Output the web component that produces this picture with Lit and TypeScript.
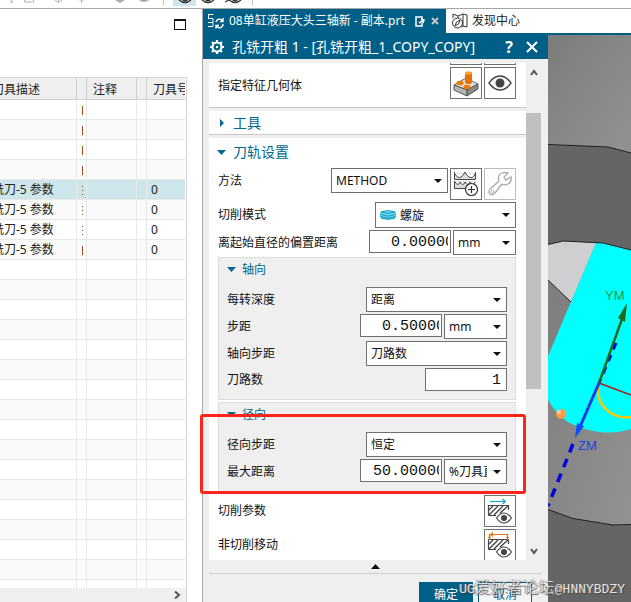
import { LitElement, html, css, svg, nothing } from "lit";
import { customElement, property } from "lit/decorators.js";

const sans = css`"Noto Sans", "Noto Sans CJK SC", sans-serif`;

/* ---------- icons ---------- */
const iconBlock = svg`
  <path d="M3 17 L15 10 L27 16 L16 22Z" fill="#dedede" stroke="#666"/>
  <path d="M3 17 L16 22 L16 28 L3 22Z" fill="#b5b5b5" stroke="#555"/>
  <path d="M27 16 L16 22 L16 28 L27 21Z" fill="#8a8a8a" stroke="#555"/>
  <ellipse cx="9" cy="15" rx="3.500" ry="2.200" fill="#f07800"/>
  <ellipse cx="16" cy="19" rx="3.500" ry="2.200" fill="#f07800"/>
  <path d="M14 5 V14 A3.500 2 0 0 0 21 14 V5Z" fill="#e87000"/>
  <ellipse cx="17.500" cy="5" rx="3.500" ry="1.800" fill="#ff9d2e"/>`;
const iconEye = svg`
  <path d="M4 15 Q9 8 15 8 Q21 8 26 15 Q21 22 15 22 Q9 22 4 15Z" fill="none" stroke="#444" stroke-width="1.400"/>
  <circle cx="15" cy="15" r="4.500" fill="#444"/>`;
const iconLevels = svg`
  <path d="M3 4 V10 H25 V4" fill="#ddd" stroke="none"/>
  <path d="M3.500 3 V10.500 H24.500 V3" fill="none" stroke="#444"/>
  <path d="M4 5 Q7 10 10 8 Q13 6 14 3 Q15 6 18 8 Q22 10 24 5" fill="#fff" stroke="#444"/>
  <path d="M4 12 V19 H25 V12" fill="#ddd"/>
  <path d="M3.500 12 V19.500 H16" fill="none" stroke="#444"/>
  <path d="M4 13 Q7 18 9 13 Q12 18 14 13 Q17 18 19 13 Q22 18 24 13" fill="#fff" stroke="#444"/>
  <circle cx="20.500" cy="20.500" r="6" fill="#fff" stroke="#333" stroke-width="1.200"/>
  <path d="M17 20.500 H24 M20.500 17 V24" stroke="#333" stroke-width="1.200"/>`;
const iconWrench = svg`
  <path d="M5 20 L14 12 Q12 6 17 4 Q20 3 23 4 L19 8 L21 11 L26 8 Q27 13 23 15 Q20 17 17 15 L10 24 Q7 27 5 25 Q3 23 5 20Z"
    fill="none" stroke="#aaa" stroke-width="1.300"/>
  <circle cx="7.500" cy="22.500" r="1.300" fill="none" stroke="#aaa"/>`;
const hatch = svg`
  <path d="M3.500 19.500 V9.500 H23.500 V14 M3.500 19.500 H11" fill="none" stroke="#444" stroke-width="1.200"/>
  <path d="M4 14 L8 10 M4 19 L13 10 M9 19 L18 10 M15 17 L23 10" stroke="#444" stroke-width="1.400"/>
  <path d="M11.500 22 Q15 17 19 17 Q23 17 26.500 22 Q23 27 19 27 Q15 27 11.500 22Z" fill="#fff" stroke="#444" stroke-width="1.200"/>
  <circle cx="19" cy="22" r="3" fill="#444"/>`;
const iconCut = svg`${hatch}
  <path d="M5 5.500 H20 M17.500 3 L20.500 5.500 L17.500 8" fill="none" stroke="#0aa5cc" stroke-width="1.200"/>`;
const iconNonCut = svg`${hatch}
  <path d="M4.500 10 V4.500 H22.500 V10 M8 2.500 L5.500 4.500 L8 6.500 M3 7.500 H6 M21 7.500 H24" fill="none" stroke="#e8730c" stroke-width="1.200"/>`;

/* ---------- drop-down ---------- */
@customElement("drop-down")
class DropDown extends LitElement {
  @property() value = "";
  @property() label = "";
  @property({ type: Boolean }) spiral = false;
  static styles = css`
    :host { display: grid; height: 25px; box-sizing: border-box; border: 1px solid #707070; background: #fff; font-family: ${sans}; }
    :host([spiral]) { height: 26px; }
    select, svg { grid-area: 1 / 1; }
    select { appearance: none; border: 0; background: none; width: 100%; min-width: 0; padding: 0 19px 0 4px; font: inherit; font-size: 12px; color: #111; text-overflow: clip; overflow: hidden; }
    .arrow { justify-self: end; align-self: center; margin-right: 5px; pointer-events: none; }
    .spiral { align-self: center; margin-left: 4px; }
    .inset { padding-left: 24px; }
  `;
  render() {
    return html`
      <select class=${this.spiral ? "inset" : ""} aria-label=${this.label}><option>${this.value}</option></select>
      ${this.spiral
        ? html`<svg class="spiral" width="16" height="10" viewBox="0 0 16 10">
            <rect y="1" width="16" height="8" rx="3" fill="#7fd6ea" />
            <path d="M1 2 Q8 -1 15 2 Q8 5 1 2 M0 4 Q8 8 16 4 M0 6 Q8 10 16 6 M1 8 Q8 11 15 8" fill="none" stroke="#05a0c8" />
          </svg>`
        : nothing}
      <svg class="arrow" width="8" height="4" viewBox="0 0 8 4"><path d="M0 0H8L4 4Z" fill="#111" /></svg>`;
  }
}

/* ---------- operation table ---------- */
type Row = { desc?: string; mark?: string; num?: string; sel?: boolean };
const rows: Row[] = [
  { mark: "solid" }, { mark: "solid" }, { mark: "solid" }, { mark: "solid" },
  { desc: "铣刀-5 参数", mark: "dots", num: "0", sel: true },
  { desc: "铣刀-5 参数", mark: "dots", num: "0" },
  { desc: "铣刀-5 参数", mark: "dots", num: "0" },
  { desc: "铣刀-5 参数", mark: "solid", num: "0" },
  ...Array.from({ length: 17 }, () => ({})),
];

@customElement("operation-table")
class OperationTable extends LitElement {
  static styles = css`
    :host { display: flex; flex-direction: column; min-height: 0; background: #fff; font: 12px ${sans}; color: #222; }
    .top { height: 68px; flex: none; display: flex; justify-content: flex-end; box-sizing: border-box; padding: 10px 16px 0 0; }
    .max { width: 12px; height: 11px; box-sizing: border-box; border: 1px solid #111; border-top-width: 2px; background: #fff; padding: 0; }
    .frame { flex: 1; min-height: 0; margin-right: 15px; border: solid #d4d4d4; border-width: 1px 1px 0 0; display: flex; flex-direction: column; }
    .clip { flex: 1; min-height: 0; overflow: hidden; margin-right: 1px; }
    table { table-layout: fixed; width: 213px; margin-left: -14px; border-collapse: separate; border-spacing: 0; }
    .c1 { width: 91px; } .c2, .c4 { width: 10px; } .c3 { width: 50px; }
    th, td { box-sizing: border-box; padding: 1px 0 0 4px; white-space: nowrap; overflow: hidden; text-align: left; font-weight: 400; line-height: 18px; border: solid #e8e8e8; border-width: 0 1px 1px 0; }
    th { height: 22px; padding: 2px 0 0 6px; background: #efefef; border-color: #cfcfcf; }
    td { height: 20px; }
    td:first-child { padding-left: 6px; }
    tr:nth-child(even) td { background: #fafafa; }
    tr.sel td { background: #cde6eb; }
    .mark { display: block; width: 1px; height: 9px; margin-left: 1px; background: #a0501e; }
    .dots { background: repeating-linear-gradient(#7a4a2a 0 1px, transparent 1px 4px); }
    .bar { flex: none; height: 14px; display: flex; justify-content: flex-end; align-items: center; background: #efefef; padding-right: 5px; }
  `;
  render() {
    return html`
      <div class="top"><button class="max" aria-label="最大化"></button></div>
      <div class="frame">
        <div class="clip">
          <table>
            <colgroup><col class="c1" /><col class="c2" /><col class="c3" /><col class="c4" /><col /></colgroup>
            <thead><tr><th>刀具描述</th><th></th><th>注释</th><th></th><th>刀具号</th></tr></thead>
            <tbody>
              ${rows.map((r) => html`<tr class=${r.sel ? "sel" : ""}>
                <td>${r.desc}</td>
                <td>${r.mark ? html`<span class="mark ${r.mark}"></span>` : nothing}</td>
                <td></td><td></td><td>${r.num}</td></tr>`)}
            </tbody>
          </table>
        </div>
        <div class="bar"><svg width="7" height="8" viewBox="0 0 7 8"><path d="M1 0.500 L5 4 L1 7.500" fill="none" stroke="#555" stroke-width="2" /></svg></div>
      </div>`;
  }
}

/* ---------- operation dialog ---------- */
@customElement("operation-dialog")
class OperationDialog extends LitElement {
  static styles = css`
    :host { display: flex; flex-direction: column; min-height: 0; background: #efefef; font: 12px ${sans}; color: #111; }
    button { font: inherit; color: inherit; padding: 0; border: 0; background: none; }
    .title { flex: none; height: 24px; box-sizing: border-box; padding: 0 9px 0 6px; display: flex; align-items: center; background: #005f87; color: #fff; }
    .title h1 { flex: 1; margin: 0 0 0 7px; font-size: 14px; font-weight: 400; line-height: 24px; white-space: nowrap; }
    .title button { width: 14px; height: 20px; margin-left: 9px; display: grid; place-items: center; }
    .help { font-size: 16px; font-weight: 700; line-height: 20px; }
    .body { flex: 1; min-height: 0; display: flex; margin: 4px 7px 0 6px; }
    .scroll { flex: 1; min-width: 0; overflow: hidden; display: flex; flex-direction: column; gap: 3px; }
    .sec { flex: none; background: #fff; box-sizing: border-box; padding: 0 10px 0 9px; border-bottom: 1px solid #c8c8c8; display: flex; flex-direction: column; gap: 2px; }
    .first { padding-bottom: 8px; }
    .first .name { padding-top: 6px; }
    .last { border-bottom: 0; }
    .row { display: flex; align-items: flex-start; gap: 2px; }
    .row label, .row .name { flex: 1; align-self: center; line-height: 20px; white-space: nowrap; }
    .row.tall .name { align-self: flex-start; line-height: 25px; }
    h2, h3 { margin: 0; font-weight: 400; color: #00688b; display: flex; align-items: center; }
    h2 { font-size: 14px; line-height: 20px; gap: 7px; height: 28px; }
    h2.closed { height: 23px; }
    h2 svg { margin-left: -1px; }
    h3 { font-size: 12px; line-height: 20px; gap: 6px; height: 23px; margin-bottom: 4px; }
    .group { box-sizing: border-box; border: 1px solid #dcdcdc; background: #efefef; padding: 0 8px 8px; display: flex; flex-direction: column; gap: 2px; }
    .ic { flex: none; width: 32px; height: 32px; box-sizing: border-box; border: 1px solid #707070; background: #fff; }
    .ic svg { display: block; width: 30px; height: 30px; }
    .ic.off { border-color: #bcbcbc; }
    .stub { height: 2px; overflow: hidden; display: flex; gap: 2px; justify-content: flex-end; }
    .stub span { width: 32px; box-sizing: border-box; border: 1px solid #707070; border-top: 0; }
    input { width: 82px; height: 23px; box-sizing: border-box; border: 1px solid #707070; border-radius: 0; background: #fff; padding: 2px 2px 0 21px; font: 15px "Liberation Mono", monospace; color: #111; outline: 0; }
    input.long { padding-left: 12px; }
    input.count { padding: 2px 5px 0 0; text-align: right; }
    .w117 { width: 117px; } .w141 { width: 141px; } .w63 { width: 63px; }
    .track { flex: none; width: 15px; display: flex; flex-direction: column; align-items: center; }
    .up { height: 50px; flex: none; box-sizing: border-box; padding-top: 6px; }
    .thumb { width: 15px; height: 276px; background: #c0c0c0; }
    .down { margin-top: auto; height: 12px; }
    .track svg { display: block; }
    .foot { flex: none; height: 42px; overflow: hidden; margin: 0 7px 0 6px; display: flex; flex-direction: column; }
    .fold { flex: none; height: 14px; box-sizing: border-box; border-bottom: 1px solid #cfcfcf; display: grid; place-items: center; }
    .acts { flex: none; display: flex; justify-content: flex-end; gap: 5px; padding: 8px 9px 0 0; }
    .acts button { width: 54px; height: 24px; box-sizing: border-box; border: 1px solid #005f87; color: #005f87; background: #f6f6f6; }
    .acts .ok { background: #005f87; color: #fff; }
  `;

  private num(id: string, label: string, value: string, unit: string, cls = "") {
    return html`<div class="row"><label for=${id}>${label}</label>
      <input id=${id} class=${cls} .value=${value} />
      <drop-down class="w63" label="单位" value=${unit}></drop-down></div>`;
  }
  private pick(label: string, value: string) {
    return html`<div class="row"><span class="name">${label}</span>
      <drop-down class="w141" label=${label} value=${value}></drop-down></div>`;
  }
  private ic(label: string, art: unknown, off = false) {
    return html`<button class="ic ${off ? "off" : ""}" aria-label=${label} ?disabled=${off}><svg viewBox="0 0 30 30">${art}</svg></button>`;
  }

  render() {
    const open = html`<svg width="9" height="5" viewBox="0 0 9 5"><path d="M0 0H9L4.500 5Z" fill="#00688b" /></svg>`;
    return html`
      <div class="title">
        <svg width="16" height="16" viewBox="0 0 16 16">
          <circle cx="8" cy="8" r="4.500" fill="none" stroke="#fff" stroke-width="2.200" />
          <path d="M8 1V4M8 12V15M1 8H4M12 8H15M3 3L5 5M11 11L13 13M3 13L5 11M11 5L13 3" stroke="#fff" stroke-width="2.200" />
          <circle cx="8" cy="8" r="1.200" fill="#fff" />
        </svg>
        <h1>孔铣开粗 1 - [孔铣开粗_1_COPY_COPY]</h1>
        <button class="help" aria-label="帮助">?</button>
        <button aria-label="关闭"><svg width="12" height="12" viewBox="0 0 12 12"><path d="M1 1L11 11M11 1L1 11" stroke="#fff" stroke-width="2" /></svg></button>
      </div>
      <div class="body">
        <div class="scroll">
          <section class="sec first">
            <div class="stub"><span></span><span></span></div>
            <div class="row"><span class="name">指定特征几何体</span>${this.ic("选择几何体", iconBlock)}${this.ic("显示", iconEye)}</div>
          </section>
          <section class="sec">
            <h2 class="closed"><svg width="9" height="8" viewBox="0 0 9 8"><path d="M3 0L7 4L3 8Z" fill="#00688b" /></svg>工具</h2>
          </section>
          <section class="sec last">
            <h2>${open}刀轨设置</h2>
            <div class="row tall"><span class="name">方法</span>
              <drop-down class="w117" label="方法" value="METHOD"></drop-down>
              ${this.ic("切削层", iconLevels)}${this.ic("编辑", iconWrench, true)}</div>
            <div class="row"><span class="name">切削模式</span><drop-down class="w141" label="切削模式" value="螺旋" spiral></drop-down></div>
            ${this.num("offset", "离起始直径的偏置距离", "0.00000", "mm")}
            <div class="group">
              <h3>${open}轴向</h3>
              ${this.pick("每转深度", "距离")}
              ${this.num("step", "步距", "0.50000", "mm")}
              ${this.pick("轴向步距", "刀路数")}
              <div class="row"><label for="passes">刀路数</label><input id="passes" class="count" .value=${"1"} /></div>
            </div>
            <div class="group">
              <h3>${open}径向</h3>
              ${this.pick("径向步距", "恒定")}
              ${this.num("maxd", "最大距离", "50.00000", "%刀具直径", "long")}
            </div>
            <div class="row"><span class="name">切削参数</span>${this.ic("切削参数", iconCut)}</div>
            <div class="row"><span class="name">非切削移动</span>${this.ic("非切削移动", iconNonCut)}</div>
          </section>
        </div>
        <div class="track">
          <div class="up"><svg width="8" height="7" viewBox="0 0 8 7"><path d="M1 6L4 2L7 6" fill="none" stroke="#555" stroke-width="2" /></svg></div>
          <div class="thumb"></div>
          <div class="down"><svg width="8" height="7" viewBox="0 0 8 7"><path d="M1 1L4 5L7 1" fill="none" stroke="#555" stroke-width="2" /></svg></div>
        </div>
      </div>
      <div class="foot">
        <div class="fold"><svg width="9" height="5" viewBox="0 0 9 5"><path d="M0 5H9L4.500 0Z" fill="#111" /></svg></div>
        <div class="acts"><button class="ok">确定</button><button>取消</button></div>
      </div>`;
  }
}

/* ---------- 3D view ---------- */
@customElement("model-view")
class ModelView extends LitElement {
  static styles = css`
    :host { display: block; min-height: 0; overflow: hidden; background: #656565; }
    svg { display: block; width: 100%; height: 100%; }
    text { font: 13px "Liberation Sans", sans-serif; }
  `;
  render() {
    return html`<svg viewBox="0 0 83 567" preserveAspectRatio="xMinYMin slice">
      <defs><linearGradient id="g" x1="0" y1="0" x2="1" y2="1"><stop offset="0" stop-color="#7c7c7c" /><stop offset="1" stop-color="#929292" /></linearGradient></defs>
      <path d="M0 0H83V118L60 112L0 109.500Z" fill="url(#g)" />
      <path d="M0 109.500L60 112L83 118" fill="none" stroke="#222" />
      <path d="M0 209.500L15 206L55 208L83 215V489.500L65 490L25 483.500L0 474.500Z" fill="url(#g)" />
      <path d="M0 474.500L25 483.500L65 490L83 489.500" fill="none" stroke="#222" />
      <path d="M0 209.500L15 206L48 208L23 267L0 245Z" fill="#cfcfd1" />
      <path d="M0 245L23 267" stroke="#222" />
      <path d="M48 208L55 208L83 215V394Q66 399 52 397Q35 395 20 387Q8 379 0 365V321Z" fill="#0ff" />
      <path d="M0 209.500L15 206L55 208L83 215" fill="none" stroke="#222" />
      <path d="M68 308L51 348" stroke="#0000e0" stroke-width="3" stroke-dasharray="7 6" />
      <path d="M25 409L0 471" stroke="#0000e0" stroke-width="3.500" stroke-dasharray="9 7" />
      <path d="M50 352C48 368 62 385 83 382" fill="none" stroke="#ffc800" stroke-width="2.500" />
      <path d="M51 348L83 360" stroke="#b01818" stroke-width="1.500" />
      <path d="M51 348L74 284" stroke="#1d6b1d" stroke-width="2.500" />
      <path d="M79 268L70 283L77 287Z" fill="#1d6b1d" />
      <path d="M51 348L31 394" stroke="#0a3ce6" stroke-width="3" />
      <path d="M27 403L29 388L36 391Z" fill="#0a4cff" />
      <circle cx="13" cy="379" r="5" fill="#ff9a40" /><circle cx="11" cy="377" r="2" fill="#e8d0b8" />
      <text x="57" y="265" fill="#1f9a4a">YM</text>
      <text x="30" y="415" fill="#1448e8">ZM</text>
    </svg>`;
  }
}

/* ---------- application window ---------- */
@customElement("app-root")
class AppRoot extends LitElement {
  static styles = css`
    :host { display: flex; flex-direction: column; height: 100vh; position: relative; overflow: hidden; background: #fff; font: 12px ${sans}; color: #222; }
    .tools { flex: none; height: 8px; border-bottom: 1px solid #a8a8a8; overflow: hidden; }
    .tools svg { display: block; }
    .main { flex: 1; min-height: 0; display: grid; grid-template-columns: 202px minmax(0, 1fr); }
    .right { display: flex; flex-direction: column; min-height: 0; border-left: 1px solid #a8a8a8; }
    .tabs { flex: none; height: 26px; box-sizing: border-box; border-bottom: 2px solid #005f87; display: flex; }
    .tab { display: flex; align-items: center; height: 24px; color: #222; text-decoration: none; white-space: nowrap; line-height: 20px; }
    .on { box-sizing: border-box; width: 243px; padding-left: 5px; background: #005f87; color: #fff; }
    .on .name { flex: 1; padding-left: 5px; }
    .close { border: 0; background: none; padding: 0 7px 0 6px; display: flex; }
    .next { padding-left: 6px; gap: 4px; }
    .work { flex: 1; min-height: 0; display: grid; grid-template-columns: 345px minmax(0, 1fr); grid-template-rows: minmax(0, 1fr); }
    .callout { position: absolute; left: 200px; top: 414px; width: 326px; height: 80px; box-sizing: border-box; border: 3px solid #ff2418; border-radius: 3px; pointer-events: none; }
    .stamp { position: absolute; right: 6px; bottom: 0; font: 13px "Liberation Mono", monospace; line-height: 24px; color: #e4e4e4; text-shadow: 1px 1px 1px #444, -1px 0 1px #777; white-space: nowrap; }
    .stamp span { font: 16px "Noto Sans CJK SC", sans-serif; font-weight: 300; line-height: 24px; }
  `;
  render() {
    return html`
      <div class="tools"><svg width="260" height="8" viewBox="0 0 260 8">
        <rect x="173" width="23" height="6" fill="#cde6eb" />
        <path d="M163.500 0V5M252.500 0V5" stroke="#c4c4c4" />
        <g fill="none" stroke="#b4b4b4"><path d="M10 2H13L11 0M24.500 0V2H33.500V0M58.500 0V2M55 0L58.500 2.500L62 0M81.500 0V3M79 0H84" /></g>
        <path d="M115 0H125L120 3ZM139 0H149Q144 4 139 0Z" fill="#aaa" />
        <g fill="none" stroke="#333" stroke-width="1.300"><path d="M179 0Q185 5 191 0M202 0Q208 5 214 0M229 0Q235 5 241 0M225 2L229 0" /></g>
        <path d="M182 0H188Q185 3 182 0ZM205 0H211Q208 3 205 0ZM232 0H238Q235 3 232 0Z" fill="#333" />
      </svg></div>
      <div class="main">
        <operation-table></operation-table>
        <div class="right">
          <nav class="tabs">
            <div class="tab on">
              <svg width="16" height="16" viewBox="0 0 16 16" fill="none" stroke="#fff">
                <path d="M0 1.500H5M0 5.500H5V9.500H0M0 13.500H5M0.500 1V5M5 1V2M5 13V10" />
                <path d="M8 9A3.500 3.500 0 0 1 14.500 8M15 5V8.500H12M15 11A3.500 3.500 0 0 1 8.500 13M8 15.500V12.500H11" stroke-width="1.400" />
              </svg>
              <span class="name">08单缸液压大头三轴新 - 副本.prt</span>
              <svg width="10" height="11" viewBox="0 0 10 11"><path d="M7 3V1H1V10H7V7M4 7L9 4M6 3L9 4L8 7" fill="none" stroke="#fff" stroke-width="1.500" /></svg>
              <button class="close" aria-label="关闭"><svg width="8" height="8" viewBox="0 0 8 8"><path d="M1 1L7 7M7 1L1 7" stroke="#c8c8c8" stroke-width="2" /></svg></button>
            </div>
            <a class="tab next" href="#discover">
              <svg width="16" height="16" viewBox="0 0 16 16" fill="none" stroke="#333">
                <path d="M1 5V1L6 3V5M6 3L11 1V13L9 14M11 1L15 2V14L11 13" />
                <circle cx="5.500" cy="10" r="5" fill="#fff" /><path d="M8 7L6.500 11L3 13L4.500 9Z" />
              </svg>发现中心</a>
          </nav>
          <div class="work">
            <operation-dialog></operation-dialog>
            <model-view></model-view>
          </div>
        </div>
      </div>
      <div class="callout"></div>
      <div class="stamp">UG<span>爱好者论坛</span>@HNNYBDZY</div>`;
  }
}
